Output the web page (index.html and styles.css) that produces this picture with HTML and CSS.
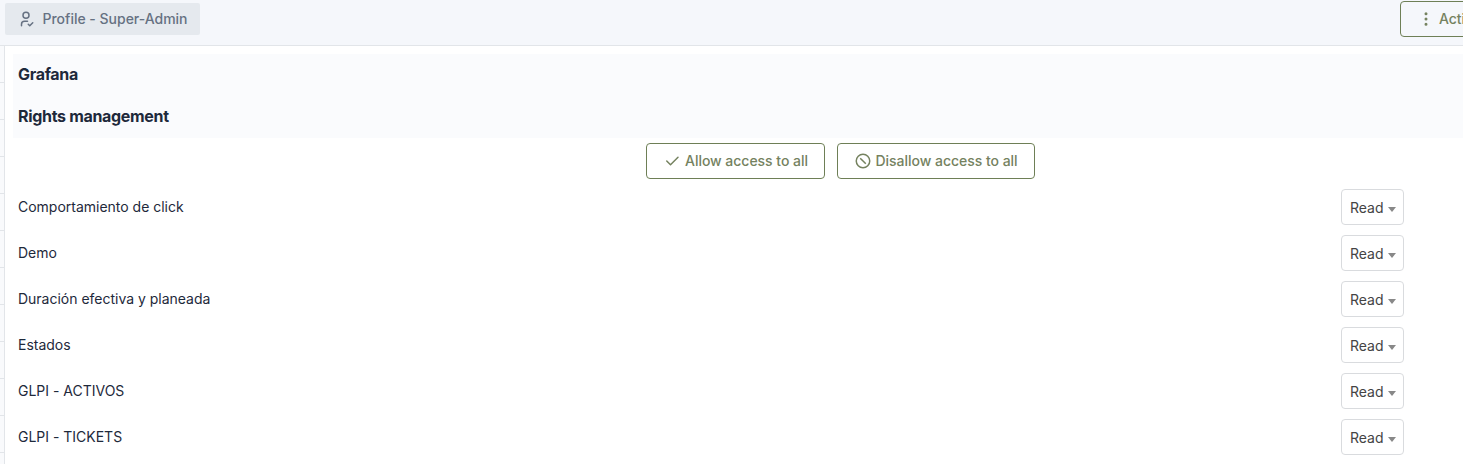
FILE: index.html
```html
<!DOCTYPE html>
<html lang="en">
<head>
<meta charset="utf-8">
<title>Profile - Super-Admin</title>
<link rel="stylesheet" href="styles.css">
</head>
<body>
<header class="topbar">
  <div class="title">
    <svg class="icon title-icon" viewBox="0 0 24 24"><path d="M8 7a4 4 0 1 0 8 0a4 4 0 0 0 -8 0"/><path d="M6 21v-2a4 4 0 0 1 4 -4h4"/><path d="M15 19l2 2l4 -4"/></svg>
    <span>Profile - Super-Admin</span>
  </div>
  <button class="btn btn-actions">
    <svg class="icon" viewBox="0 0 24 24"><circle cx="12" cy="12" r="1"/><circle cx="12" cy="19" r="1"/><circle cx="12" cy="5" r="1"/></svg>
    <span>Actions</span>
  </button>
</header>
<main class="layout">
  <nav class="tabs">
    <div class="tab"></div><div class="tab"></div><div class="tab"></div><div class="tab"></div>
    <div class="tab"></div><div class="tab"></div><div class="tab"></div><div class="tab"></div>
    <div class="tab"></div><div class="tab"></div><div class="tab"></div><div class="tab"></div>
  </nav>
  <section class="content">
    <h2 class="heading">Grafana</h2>
    <h2 class="heading">Rights management</h2>
    <div class="buttons">
      <button class="btn btn-allow">
        <svg class="icon" viewBox="0 0 24 24"><path d="M5 12l5 5l10 -10"/></svg>
        <span>Allow access to all</span>
      </button>
      <button class="btn btn-disallow">
        <svg class="icon" viewBox="0 0 24 24"><circle cx="12" cy="12" r="9"/><path d="M9 9l6 6" stroke-linecap="square"/></svg>
        <span>Disallow access to all</span>
      </button>
    </div>
    <div class="row"><span>Comportamiento de click</span><div class="select">Read<i class="caret"></i></div></div>
    <div class="row"><span>Demo</span><div class="select">Read<i class="caret"></i></div></div>
    <div class="row"><span>Duración efectiva y planeada</span><div class="select">Read<i class="caret"></i></div></div>
    <div class="row"><span>Estados</span><div class="select">Read<i class="caret"></i></div></div>
    <div class="row"><span>GLPI - ACTIVOS</span><div class="select">Read<i class="caret"></i></div></div>
    <div class="row"><span>GLPI - TICKETS</span><div class="select">Read<i class="caret"></i></div></div>
  </section>
</main>
</body>
</html>
```
FILE: styles.css
```css
* { box-sizing: border-box; }
body {
  margin: 0;
  height: 464px;
  overflow: hidden;
  background: #fff;
  color: #1e293b;
  font: 14px/20px Inter, sans-serif;
  letter-spacing: -0.01px;
}
.icon {
  width: 18px;
  height: 18px;
  flex: none;
  fill: none;
  stroke: currentColor;
  stroke-width: 2;
  stroke-linecap: round;
  stroke-linejoin: round;
}
.topbar {
  display: flex;
  justify-content: space-between;
  align-items: flex-start;
  height: 46px;
  padding-left: 5px;
  overflow: hidden;
  background: #f5f7fb;
  border-bottom: 1px solid #e2e5e9;
}
.title {
  display: flex;
  align-items: center;
  gap: 7.5px;
  width: 195px;
  height: 32px;
  margin-top: 3px;
  padding-left: 12px;
  border-radius: 2px;
  background: #e5e9ee;
  color: #667182;
  font-weight: 500;
  white-space: nowrap;
}
.btn {
  display: flex;
  align-items: center;
  height: 36px;
  padding: 0 0 0 16px;
  gap: 4px;
  border: 1px solid #6e7f56;
  border-radius: 4px;
  background: transparent;
  color: #75825f;
  font: 500 14px/20px Inter, sans-serif;
  letter-spacing: -0.03px;
  white-space: nowrap;
}
.btn-actions { width: 100px; margin: 1px -37px 0 0; }
.layout { display: flex; height: 418px; }
.tabs {
  flex: none;
  width: 5px;
  overflow: hidden;
  background: #f9fafc;
  border-right: 1px solid #e2e5e9;
}
.tab { height: 37px; border-bottom: 1px solid #e2e5e9; }
.content { flex: 1; padding: 8px 0 0 8px; }
.heading {
  height: 42px;
  margin: 0;
  padding-left: 5px;
  background: #fafbfd;
  font-size: 16px;
  font-weight: 700;
  letter-spacing: -0.32px;
  line-height: 41px;
}
.buttons {
  display: flex;
  gap: 12px;
  padding: 5px 0 0 633px;
  height: 47px;
}
.btn-allow { width: 179px; }
.btn-disallow { width: 198px; padding-left: 15.5px; }
.row {
  display: flex;
  justify-content: space-between;
  height: 46px;
  padding: 4px 59px 0 5px;
  line-height: 36px;
}
.select {
  display: flex;
  align-items: center;
  gap: 4.6px;
  width: 63px;
  height: 36px;
  padding: 2px 0 0 8px;
  border: 1px solid #d9dbde;
  border-radius: 4px;
  color: #444;
}
.caret {
  margin-top: 2px;
  border: 4px solid transparent;
  border-top: 5px solid #888;
  border-bottom: 0;
}
```
